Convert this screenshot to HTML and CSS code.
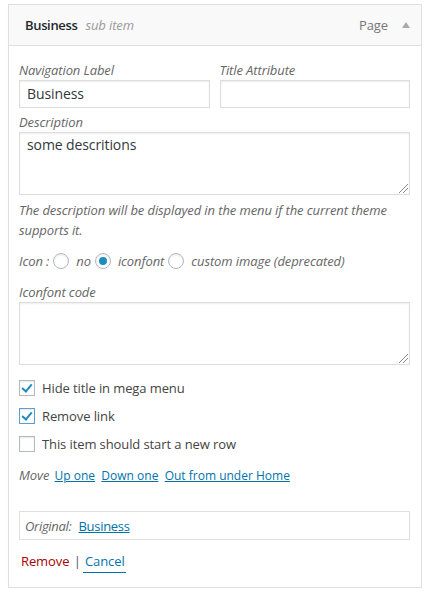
FILE: index.html
```html
<!DOCTYPE html>
<html>
<head>
<meta charset="utf-8">
<link rel="stylesheet" href="styles.css">
</head>
<body>
<div class="menu-item">
  <div class="handle">
    <span class="item-title">Business</span>
    <span class="item-sub">sub item</span>
    <span class="item-type">Page</span>
    <span class="item-arrow"></span>
  </div>
  <div class="settings">
    <div class="row two">
      <label class="field">
        <span class="lbl">Navigation Label</span>
        <span class="input">Business</span>
      </label>
      <label class="field">
        <span class="lbl">Title Attribute</span>
        <span class="input"></span>
      </label>
    </div>
    <div class="field desc-field">
      <span class="lbl">Description</span>
      <span class="textarea">some descritions<span class="grip"></span></span>
      <p class="help">The description will be displayed in the menu if the current theme supports it.</p>
    </div>
    <div class="icon-row">
      <span class="lbl-i">Icon :</span>
      <span class="radio"></span><span class="opt">no</span>
      <span class="radio checked"></span><span class="opt">iconfont</span>
      <span class="radio"></span><span class="opt">custom image (deprecated)</span>
    </div>
    <div class="field code-field">
      <span class="lbl">Iconfont code</span>
      <span class="textarea"><span class="grip"></span></span>
    </div>
    <div class="checks">
      <div class="check-row"><span class="cb on"></span>Hide title in mega menu</div>
      <div class="check-row"><span class="cb on focus"></span>Remove link</div>
      <div class="check-row"><span class="cb"></span>This item should start a new row</div>
    </div>
    <div class="move">
      <span class="lbl-i">Move</span>
      <a href="#">Up one</a>
      <a href="#">Down one</a>
      <a href="#">Out from under Home</a>
    </div>
    <div class="original">
      <span class="lbl-i">Original:</span>
      <a href="#">Business</a>
    </div>
    <div class="actions">
      <a class="remove" href="#">Remove</a>
      <span class="sep">|</span>
      <a class="cancel" href="#">Cancel</a>
    </div>
  </div>
</div>
</body>
</html>
```

FILE: styles.css
```css
* { box-sizing: border-box; }
body {
  margin: 0;
  background: #fff;
  font-family: "Open Sans", "Liberation Sans", sans-serif;
  font-size: 13px;
  color: #444;
  letter-spacing: -0.1px;
}
.menu-item {
  margin: 4px 0 0 8px;
  width: 414px;
  border: 1px solid #dfdfdf;
  box-shadow: 0 1px 1px rgba(0,0,0,0.04);
}
.handle {
  height: 41px;
  background: #f9f9f9;
  border-bottom: 1px solid #dfdfdf;
  display: flex;
  align-items: center;
  padding: 0 0 0 16px;
}
.item-title {
  font-weight: 600;
  color: #23282d;
  font-size: 13px;
  letter-spacing: -0.35px;
}
.item-sub {
  font-style: italic;
  color: #999;
  margin-left: 8px;
}
.item-type {
  margin-left: auto;
  color: #777;
}
.item-arrow {
  width: 0; height: 0;
  border-left: 4px solid transparent;
  border-right: 4px solid transparent;
  border-bottom: 6px solid #aaa;
  margin: 0 11px 0 14px;
}
.settings {
  padding: 15px 11px 16px 10px;
}
.row.two {
  display: flex;
  gap: 10px;
}
.field { display: block; flex: 1; }
.lbl, .lbl-i {
  font-style: italic;
  color: #666;
}
.lbl {
  display: block;
  line-height: 19px;
}
.input {
  display: block;
  height: 28px;
  border: 1px solid #ddd;
  box-shadow: inset 0 1px 2px rgba(0,0,0,0.07);
  font-size: 14px;
  line-height: 26px;
  padding: 0 7px;
  color: #32373c;
}
.desc-field { margin-top: 5px; }
.textarea {
  display: block;
  position: relative;
  height: 63px;
  border: 1px solid #ddd;
  box-shadow: inset 0 1px 2px rgba(0,0,0,0.07);
  font-size: 14px;
  line-height: 20px;
  padding: 2px 7px;
  color: #32373c;
}
.grip {
  position: absolute;
  right: 1px; bottom: 1px;
  width: 9px; height: 9px;
  background: linear-gradient(135deg, transparent 0 45%, #888 45% 52%, transparent 52% 70%, #888 70% 77%, transparent 77%);
}
.help {
  margin: 5px 0 0;
  font-style: italic;
  color: #666;
  line-height: 20px;
}
.icon-row {
  display: flex;
  align-items: center;
  height: 20px;
  margin-top: 11px;
}
.radio {
  width: 16px; height: 16px;
  border: 1px solid #b4b9be;
  border-radius: 50%;
  box-shadow: inset 0 1px 2px rgba(0,0,0,0.1);
  margin: 0 7px 0 4px;
  position: relative;
  flex: none;
}
.radio.checked::after {
  content: "";
  position: absolute;
  left: 3px; top: 3px;
  width: 8px; height: 8px;
  border-radius: 50%;
  background: #1e8cbe;
}
.opt {
  font-style: italic;
  color: #666;
}
.code-field { margin-top: 12px; }
.checks { margin-top: 9px; }
.check-row {
  display: flex;
  align-items: center;
  height: 28px;
  color: #444;
}
.cb {
  width: 16px; height: 16px;
  border: 1px solid #b4b9be;
  box-shadow: inset 0 1px 2px rgba(0,0,0,0.1);
  margin-right: 7px;
  position: relative;
  flex: none;
}
.cb.focus { border-color: #5b9dd9; }
.cb.on::after {
  content: "";
  position: absolute;
  left: 4px; top: 1px;
  width: 4px; height: 8px;
  border: solid #1e8cbe;
  border-width: 0 2.5px 2.5px 0;
  transform: rotate(40deg);
}
.move {
  margin-top: 7px;
  line-height: 20px;
}
a {
  color: #0073aa;
  text-decoration: underline;
}
.move a { margin-left: 3px; font-size: 12px; letter-spacing: 0; }
.move .lbl-i + a { margin-left: 2px; }
.original {
  margin-top: 25px;
  border: 1px solid #dfdfdf;
  height: 29px;
  padding: 0 5px;
  display: flex;
  align-items: center;
  gap: 7px;
}
.original .lbl-i { letter-spacing: -0.3px; }
.original a { letter-spacing: -0.3px; }
.actions {
  margin-top: 11px;
  line-height: 20px;
  padding-left: 2px;
}
.remove { color: #a00; text-decoration: none; }
.sep { color: #555; margin: 0 -1px 0 1px; }
.cancel {
  text-decoration: none;
  border-bottom: 1px solid #0073aa;
  padding: 0 1px 2px 2px;
}
```
